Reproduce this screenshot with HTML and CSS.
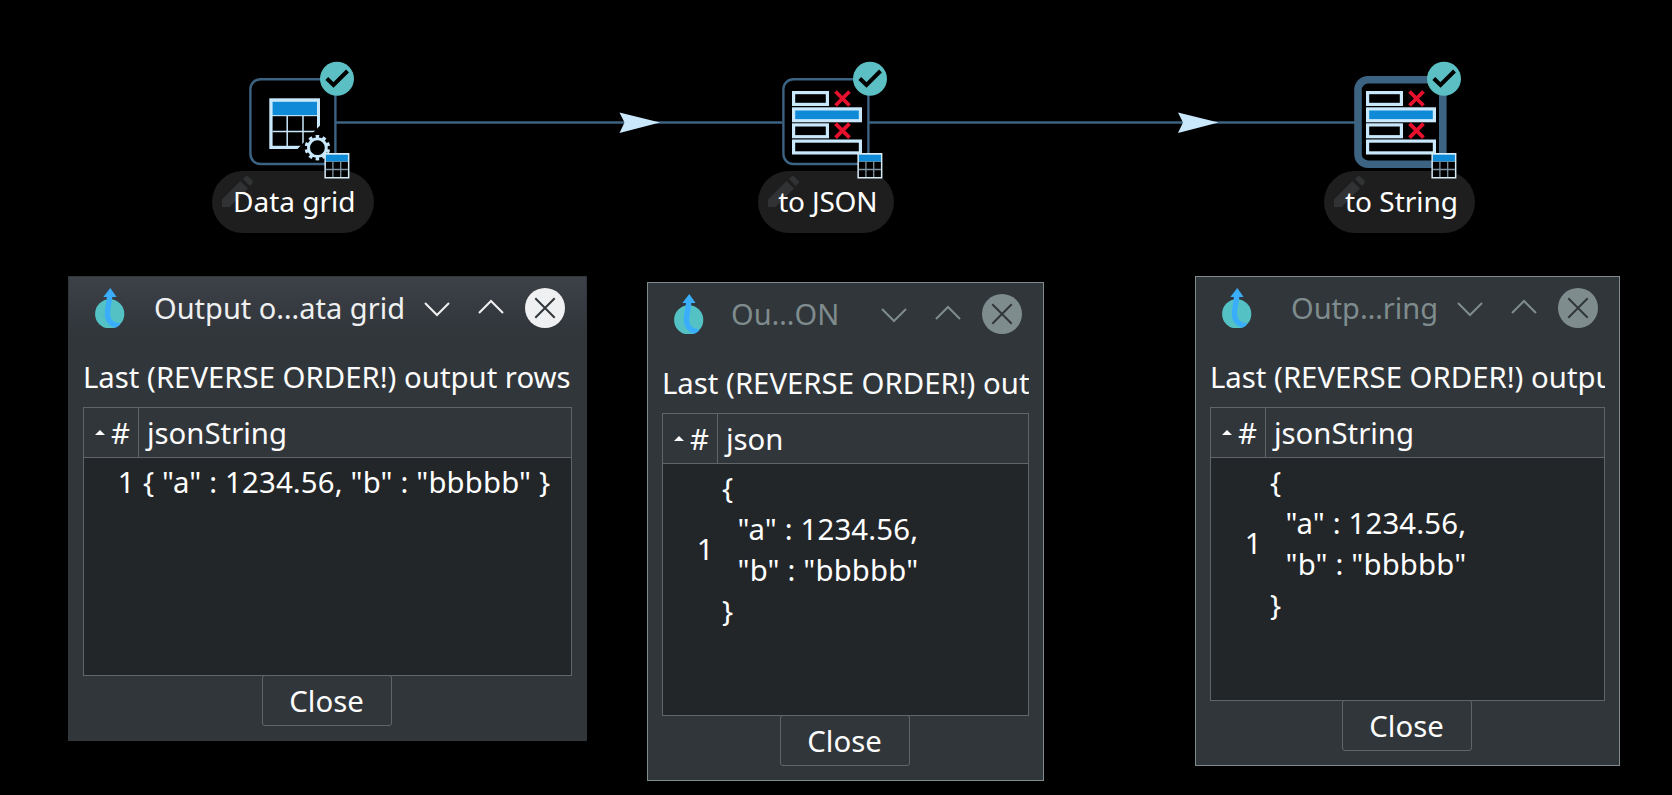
FILE: index.html
```html
<!DOCTYPE html>
<html lang="en">
<head>
<meta charset="utf-8">
<title>Pipeline preview</title>
<link rel="stylesheet" href="styles.css">
</head>
<body>
<svg class="defs" width="0" height="0" aria-hidden="true">
  <symbol id="logo" viewBox="0 0 32 40">
    <clipPath id="disc"><path d="M0 0H32V14H25A14.7 14.7 0 0 1 30.4 25.7A14.7 14.7 0 0 1 21 40H0z"/></clipPath>
    <circle cx="15.7" cy="25.9" r="14.6" fill="#54c2c5"/>
    <g clip-path="url(#disc)"><path d="M15.7 8C15.2 16 12.9 21 13.6 28C14.4 33.500 19 37.500 26 38" fill="none" stroke="#3aaefa" stroke-width="5.400"/></g>
    <path d="M16.300 0L22.600 8.900H9.300z" fill="#3aaefa"/>
  </symbol>
  <symbol id="down" viewBox="0 0 26 16"><path d="M1 2L13 14L25 2" fill="none" stroke="currentColor" stroke-width="2"/></symbol>
  <symbol id="up" viewBox="0 0 26 16"><path d="M1 14L13 2L25 14" fill="none" stroke="currentColor" stroke-width="2"/></symbol>
  <symbol id="close" viewBox="0 0 40 40"><circle cx="20" cy="20" r="20" fill="currentColor"/><path d="M10.300 10.300L29.700 29.700M29.700 10.300L10.300 29.700" stroke="#31363b" stroke-width="2"/></symbol>
  <symbol id="badges" viewBox="0 0 110 125">
    <circle cx="88" cy="18.700" r="17" fill="#5cbfc4"/>
    <path d="M77.800 18.500L84.500 25L98.500 11" fill="none" stroke="#000" stroke-width="4"/>
    <rect x="75.400" y="93" width="25" height="25.500" fill="#d6ebf8"/>
    <rect x="76.900" y="94.700" width="22" height="6.700" fill="#0e8ad6"/>
    <rect x="76.900" y="101.700" width="22" height="15.300" fill="#000"/>
    <path d="M83.900 101.700V117M91.700 101.700V117M76.900 109.500H98.900" stroke="#7f95a3" stroke-width="1.300"/>
  </symbol>
  <symbol id="rows" viewBox="0 0 110 125">
    <g fill="none" stroke="#c9e8fb" stroke-width="3.200">
      <rect x="11.600" y="32.600" width="33.800" height="11.800"/>
      <rect x="11.600" y="48.900" width="66.800" height="11.800" fill="#0e8ad6"/>
      <rect x="11.600" y="64.900" width="33.800" height="11.800"/>
      <rect x="11.600" y="81.100" width="66.800" height="11.800"/>
    </g>
    <path d="M53.500 31.500L67.500 45.500M67.500 31.500L53.500 45.500M53.500 63.700L67.500 77.700M67.500 63.700L53.500 77.700" stroke="#e8112d" stroke-width="3.800"/>
  </symbol>
  <symbol id="pencil" viewBox="0 0 32 32">
    <path d="M0 31V23.500L18.500 5L26 12.500L7.500 31zM20.800 3L24 0Q25-.5 26 .3L30.600 5Q31.400 6 30.600 7L27.800 10z" fill="#303234"/>
  </symbol>
</svg>

<main class="desktop">
  <svg class="hops" viewBox="0 0 1672 240">
    <path d="M336 122.400H782M869 122.400H1356" stroke="#3d6382" stroke-width="2.500"/>
    <path d="M619.500 112.500L660 122.500L619.500 133L624.500 122.500zM1178 112.500L1218.500 122.500L1178 133L1183 122.500z" fill="#c9e8fb"/>
  </svg>

  <section class="node grid-node">
    <svg class="node-icon" viewBox="0 0 110 125">
      <rect x="1.400" y="19.200" width="85" height="84.800" rx="10" fill="none" stroke="#3d6382" stroke-width="2.400"/>
      <rect x="20.300" y="38.300" width="50.700" height="50.700" fill="#c9e8fb"/>
      <rect x="23.600" y="41.800" width="44.400" height="13.300" fill="#0e8ad6"/>
      <rect x="23.600" y="56.200" width="44.400" height="29.600" fill="#000"/>
      <path d="M38.200 56V86M54 56V86M23.500 71.500H68" stroke="#c9e8fb" stroke-width="1.500"/>
      <path d="M73 63.500L47.500 90H73z" fill="#000"/>
      <circle cx="68.400" cy="87.700" r="8.900" fill="none" stroke="#c9e8fb" stroke-width="3"/>
      <circle cx="68.400" cy="87.700" r="11" fill="none" stroke="#c9e8fb" stroke-width="3.600" pathLength="100" stroke-dasharray="5 5" stroke-dashoffset="-2.500"/>
      <use href="#badges"/>
    </svg>
    <div class="label"><svg class="pencil"><use href="#pencil"/></svg><span>Data grid</span></div>
  </section>

  <section class="node json-node">
    <svg class="node-icon" viewBox="0 0 110 125">
      <rect x="1.400" y="19.200" width="85" height="84.800" rx="10" fill="none" stroke="#3d6382" stroke-width="2.400"/>
      <use href="#rows"/><use href="#badges"/>
    </svg>
    <div class="label"><svg class="pencil"><use href="#pencil"/></svg><span>to JSON</span></div>
  </section>

  <section class="node string-node">
    <svg class="node-icon" viewBox="0 0 110 125">
      <rect x="2" y="19.800" width="84.800" height="84.400" rx="10" fill="none" stroke="#3d6382" stroke-width="7.600"/>
      <use href="#rows"/><use href="#badges"/>
    </svg>
    <div class="label"><svg class="pencil"><use href="#pencil"/></svg><span>to String</span></div>
  </section>

  <section class="window w-grid active">
    <header class="titlebar"><svg class="logo"><use href="#logo"/></svg><h2>Output o…ata grid</h2><div class="controls"><svg class="chev down"><use href="#down"/></svg><svg class="chev up"><use href="#up"/></svg><svg class="x"><use href="#close"/></svg></div></header>
    <p class="caption">Last (REVERSE ORDER!) output rows</p>
    <div class="table">
      <div class="thead"><div class="num"><i class="sort"></i>#</div><div class="col">jsonString</div></div>
      <div class="row"><div class="idx">1</div><pre class="val">{ "a" : 1234.56, "b" : "bbbbb" }</pre></div>
    </div>
    <button class="btn">Close</button>
  </section>

  <section class="window w-json">
    <header class="titlebar"><svg class="logo"><use href="#logo"/></svg><h2>Ou…ON</h2><div class="controls"><svg class="chev down"><use href="#down"/></svg><svg class="chev up"><use href="#up"/></svg><svg class="x"><use href="#close"/></svg></div></header>
    <p class="caption">Last (REVERSE ORDER!) out</p>
    <div class="table">
      <div class="thead"><div class="num"><i class="sort"></i>#</div><div class="col">json</div></div>
      <div class="row"><div class="idx tall">1</div><pre class="val">{
  "a" : 1234.56,
  "b" : "bbbbb"
}</pre></div>
    </div>
    <button class="btn">Close</button>
  </section>

  <section class="window w-string">
    <header class="titlebar"><svg class="logo"><use href="#logo"/></svg><h2>Outp…ring</h2><div class="controls"><svg class="chev down"><use href="#down"/></svg><svg class="chev up"><use href="#up"/></svg><svg class="x"><use href="#close"/></svg></div></header>
    <p class="caption">Last (REVERSE ORDER!) outpu</p>
    <div class="table">
      <div class="thead"><div class="num"><i class="sort"></i>#</div><div class="col">jsonString</div></div>
      <div class="row"><div class="idx tall">1</div><pre class="val">{
  "a" : 1234.56,
  "b" : "bbbbb"
}</pre></div>
    </div>
    <button class="btn">Close</button>
  </section>
</main>
</body>
</html>
```
FILE: styles.css
```css
* { box-sizing: border-box; }
body { margin: 0; background: #000; font: 29.33px/41px "Noto Sans", sans-serif; color: #eff0f1; }
.defs { position: absolute; }
.desktop { position: relative; width: 1672px; height: 795px; overflow: hidden; background: #000; }
.hops { position: absolute; left: 0; top: 0; width: 1672px; height: 240px; }

.node { position: absolute; top: 60px; display: flex; flex-direction: column; align-items: center; }
.node-icon { position: absolute; z-index: 1; top: 0; width: 110px; height: 125px; overflow: visible; }
.label { display: grid; place-items: center; margin-top: 111px; height: 62px; width: 100%; border-radius: 31px; background: #1e1e1e; color: #fff; font-size: 28px; white-space: pre; }
.label > * { grid-area: 1 / 1; }
.label span { z-index: 1; padding: 0 0 2px 3px; }
.pencil { width: 32px; height: 32px; justify-self: start; align-self: start; margin: 5px 0 0 10px; }
.grid-node { left: 212px; width: 161.500px; }
.grid-node .node-icon { left: 37px; }
.json-node { left: 758px; width: 135.500px; }
.json-node .node-icon { left: 24px; }
.json-node .label span, .string-node .label span { padding-left: 4px; }
.string-node { left: 1324px; width: 151px; }
.string-node .node-icon { left: 32px; }
.json-node .label span { letter-spacing: -.2px; }

.window { position: absolute; display: flex; flex-direction: column; background: #31363b; border: 1px solid #7f8c8d; padding: 0 14px 14px; color: #fcfcfc; }
.window.active { border-color: #31363b; background: linear-gradient(#3d4148, #31363b 55px); }
.w-grid { left: 68px; top: 276px; width: 519px; height: 465px; }
.w-json { left: 647px; top: 282px; width: 397px; height: 499px; }
.w-string { left: 1195px; top: 276px; width: 425px; height: 490px; }

.titlebar { display: flex; align-items: flex-start; height: 80px; padding: 11px 7px 0 11px; color: #7f8c8d; }
.active .titlebar { color: #eff0f1; }
.logo { width: 32px; height: 40px; flex: none; }
h2 { margin: 0 0 0 28px; font-size: 29px; font-weight: 400; line-height: 39px; white-space: nowrap; }
.w-json h2 { margin-left: 26px; }
.w-string h2 { margin-left: 38px; }
.controls { display: flex; align-items: center; height: 40px; margin-left: auto; }
.chev { width: 26px; height: 16px; margin-right: 28px; }
.chev.down { margin-top: 2px; }
.chev.up { margin-right: 21px; margin-top: -2px; }
.x { width: 40px; height: 40px; }

.caption { margin: 0; height: 50px; line-height: 41px; white-space: nowrap; overflow: hidden; }
.table { flex: 1; border: 1px solid #616569; background: #232629; display: flex; flex-direction: column; }
.thead { display: flex; height: 50px; background: #31363b; border-bottom: 1px solid #616569; line-height: 51px; }
.num { display: flex; align-items: center; justify-content: flex-end; width: 55px; height: 49px; border-right: 1px solid #616569; padding: 2px 8px 0 0; }
.sort { border: 5px solid transparent; border-top: 0; border-bottom: 5px solid #fcfcfc; margin: -3px 6px 0 0; }
.col { padding-left: 8px; }
.row { display: flex; align-items: center; color: #fff; padding-top: 4px; }
.idx { width: 50.500px; text-align: right; }
.idx.tall { padding-bottom: 2px; }
.val { margin: 0 0 0 8.500px; font: inherit; letter-spacing: .16px; }
.btn { align-self: center; width: 130px; height: 51px; margin: -1px 1px 0 0; padding: 2px 1px 0 0; border: 1px solid #616569; border-radius: 3px; background: #31363b; color: inherit; font: inherit; }
```
